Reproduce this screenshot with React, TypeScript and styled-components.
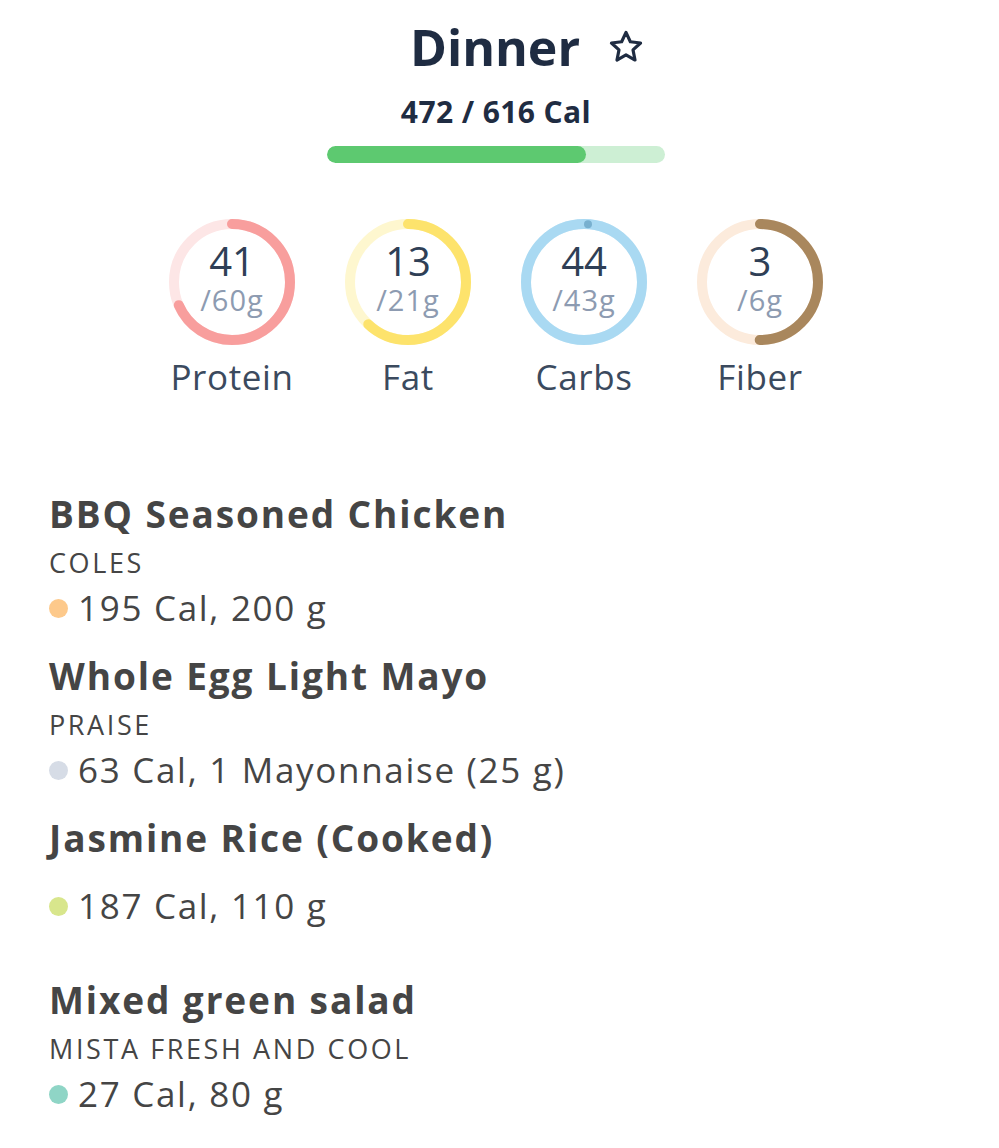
import React from 'react'
import styled, { createGlobalStyle } from 'styled-components'

const GlobalStyle = createGlobalStyle`
  html, body {
    margin: 0;
    background: #fff;
  }
  body {
    font-family: 'Open Sans', 'Noto Sans', sans-serif;
    -webkit-font-smoothing: antialiased;
  }
`

const Page = styled.div`
  width: 999px;
  padding-right: 7px;
  box-sizing: border-box;
`

const Header = styled.header`
  display: flex;
  flex-direction: column;
  align-items: center;
`

const TitleRow = styled.div`
  display: flex;
  align-items: center;
  gap: 26px;
  padding-left: 64px;
  height: 94px;
`

const Title = styled.h1`
  margin: 0;
  font-size: 50px;
  font-weight: 700;
  color: #1f2c42;
`

const StarBtn = styled.button`
  display: flex;
  padding: 0;
  border: 0;
  background: transparent;
  color: #1f2c42;
`

const CalText = styled.div`
  font-size: 30px;
  font-weight: 700;
  letter-spacing: 0.4px;
  color: #1f2c42;
  line-height: 36px;
`

const Track = styled.div`
  width: 338px;
  height: 17px;
  margin-top: 16px;
  border-radius: 9px;
  background: #cdefd4;
  overflow: hidden;
`

const Fill = styled.div`
  height: 100%;
  border-radius: 9px;
  background: #5dc970;
`

const Macros = styled.div`
  display: grid;
  grid-template-columns: repeat(4, 176px);
  justify-content: center;
  margin-top: 55px;
`

const Macro = styled.div`
  display: flex;
  flex-direction: column;
  align-items: center;
`

const RingBox = styled.div`
  position: relative;
  width: 128px;
  height: 128px;
`

const RingText = styled.div`
  position: absolute;
  inset: 0;
  display: flex;
  flex-direction: column;
  align-items: center;
  justify-content: center;
  padding-bottom: 8px;
`

const Amount = styled.span`
  font-size: 40px;
  line-height: 44px;
  color: #2f3f56;
`

const Goal = styled.span`
  font-size: 29px;
  line-height: 34px;
  letter-spacing: 1px;
  color: #8d9bb1;
`

const MacroName = styled.div`
  margin-top: 10px;
  font-size: 35px;
  line-height: 42px;
  letter-spacing: 0.6px;
  color: #3b4a5e;
`

const FoodList = styled.ul`
  list-style: none;
  margin: 80px 0 0;
  padding: 0 0 0 49px;
`

const Food = styled.li`
  display: flex;
  flex-direction: column;
  min-height: 162px;
  color: #454545;
`

const FoodName = styled.div`
  margin: 12px 0;
  font-size: 37px;
  line-height: 48px;
  font-weight: 700;
  letter-spacing: 1.9px;
`

const Brand = styled.div`
  font-size: 27px;
  line-height: 26px;
  letter-spacing: 2.6px;
  text-transform: uppercase;
`

const Serving = styled.div`
  display: flex;
  align-items: center;
  gap: 10px;
  margin: 12px 0;
  font-size: 35px;
  line-height: 40px;
  letter-spacing: 1.7px;
`

const Dot = styled.span<{ $color: string }>`
  flex: none;
  width: 19px;
  height: 19px;
  border-radius: 50%;
  background: ${p => p.$color};
`

interface RingProps {
  value: number
  goal: number
  color: string
  track: string
}

const Ring = ({ value, goal, color, track }: RingProps) => {
  const r = 58
  const c = 2 * Math.PI * r
  const pct = Math.min(value / goal, 1)
  const over = value > goal
  return (
    <svg width="128" height="128" viewBox="0 0 128 128">
      <circle cx="64" cy="64" r={r} fill="none" stroke={track} strokeWidth="10" />
      <circle
        cx="64"
        cy="64"
        r={r}
        fill="none"
        stroke={color}
        strokeWidth="10"
        strokeLinecap={pct < 1 ? 'round' : 'butt'}
        strokeDasharray={`${pct * c} ${c}`}
        transform="rotate(-90 64 64)"
      />
      {over && <circle cx="68" cy="6.2" r="4" fill="#78b0cf" />}
    </svg>
  )
}

const macros = [
  { name: 'Protein', value: 41, goal: 60, color: '#f89e9d', track: '#fde6e6' },
  { name: 'Fat', value: 13, goal: 21, color: '#fde36c', track: '#fef7cf' },
  { name: 'Carbs', value: 44, goal: 43, color: '#a9d9f2', track: '#def1fb' },
  { name: 'Fiber', value: 3, goal: 6, color: '#a9875d', track: '#fcebdc' }
]

const foods = [
  { name: 'BBQ Seasoned Chicken', brand: 'Coles', serving: '195 Cal, 200 g', dot: '#fdc98b' },
  { name: 'Whole Egg Light Mayo', brand: 'Praise', serving: '63 Cal, 1 Mayonnaise (25 g)', dot: '#d6dce6' },
  { name: 'Jasmine Rice (Cooked)', brand: '', serving: '187 Cal, 110 g', dot: '#d8e68c' },
  { name: 'Mixed green salad', brand: 'Mista Fresh and Cool', serving: '27 Cal, 80 g', dot: '#8fd5c6' }
]

const Star = () => (
  <svg width="40" height="38" viewBox="0 0 24 24" fill="none" stroke="currentColor" strokeWidth="2" strokeLinejoin="round">
    <path d="M12 2.8l2.75 5.9 6.45.75-4.78 4.4 1.28 6.37L12 17l-5.7 3.22 1.28-6.37L2.8 9.45l6.45-.75z" />
  </svg>
)

export default function App() {
  const eaten = 472
  const target = 616
  return (
    <Page>
      <GlobalStyle />
      <Header>
        <TitleRow>
          <Title>Dinner</Title>
          <StarBtn aria-label="favourite">
            <Star />
          </StarBtn>
        </TitleRow>
        <CalText>
          {eaten} / {target} Cal
        </CalText>
        <Track>
          <Fill style={{ width: `${(eaten / target) * 100}%` }} />
        </Track>
      </Header>

      <Macros>
        {macros.map(m => (
          <Macro key={m.name}>
            <RingBox>
              <Ring value={m.value} goal={m.goal} color={m.color} track={m.track} />
              <RingText>
                <Amount>{m.value}</Amount>
                <Goal>/{m.goal}g</Goal>
              </RingText>
            </RingBox>
            <MacroName>{m.name}</MacroName>
          </Macro>
        ))}
      </Macros>

      <FoodList>
        {foods.map(f => (
          <Food key={f.name}>
            <FoodName>{f.name}</FoodName>
            {f.brand && <Brand>{f.brand}</Brand>}
            <Serving>
              <Dot $color={f.dot} />
              {f.serving}
            </Serving>
          </Food>
        ))}
      </FoodList>
    </Page>
  )
}
